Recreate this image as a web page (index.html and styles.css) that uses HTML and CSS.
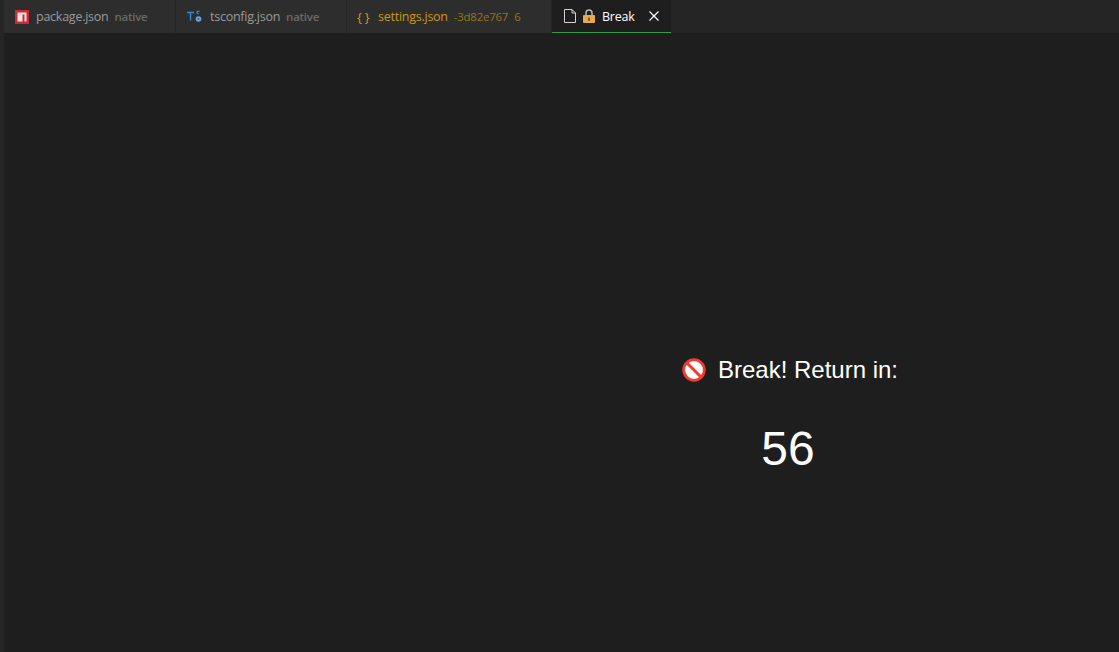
FILE: index.html
```html
<!DOCTYPE html>
<html lang="en">
<head>
    <meta charset="UTF-8">
    <meta name="viewport" content="width=device-width, initial-scale=1.0">
    <title>Break</title>
    <link rel="stylesheet" href="styles.css">
</head>
<body>
    <div class="workbench">
        <div class="tabs">
            <div class="tab tab-package">
                <svg class="icon" width="14" height="14" viewBox="0 0 14 14">
                    <rect width="14" height="14" fill="#cb2a31"/>
                    <path d="M2.5 2.5h9v9H9.5V4.5H7.5v7h-5z" fill="#f3e3e3"/>
                </svg>
                <span class="name">package.json</span>
                <span class="desc">native</span>
            </div>
            <div class="tab tab-tsconfig">
                <svg class="icon" width="16" height="14" viewBox="0 0 16 14">
                    <path d="M0 2.5h7M3.5 2.5v8" stroke="#2f8fdc" stroke-width="1.4" fill="none"/>
                    <path d="M12.5 1.5c-2-1-3.5.6-2 1.8l1 .7" stroke="#2f8fdc" stroke-width="1.2" fill="none"/>
                    <circle cx="11.5" cy="9" r="2.8" fill="#6fa8d8"/>
                    <circle cx="11.5" cy="9" r="1" fill="#2a5f8f"/>
                </svg>
                <span class="name">tsconfig.json</span>
                <span class="desc">native</span>
            </div>
            <div class="tab tab-settings">
                <span class="braces">{ }</span>
                <span class="name">settings.json</span>
                <span class="desc">-3d82e767</span>
                <span class="desc count">6</span>
            </div>
            <div class="tab tab-active">
                <svg class="icon" width="12" height="14" viewBox="0 0 12 14">
                    <path d="M.5.5h7.5l3.500 3.500v9.500H.5z" fill="none" stroke="#d8cfcf"/>
                    <path d="M8 .5v3.500h3.500" fill="none" stroke="#d8cfcf"/>
                </svg>
                <svg class="icon" width="12" height="14" viewBox="0 0 12 14">
                    <path d="M3 6.500V4a3 3 0 0 1 6 0v2.500" fill="none" stroke="#b9b9b9" stroke-width="1.500"/>
                    <rect y="6" width="12" height="8" rx="1" fill="#e8aa4c"/>
                    <rect x="5.200" y="8.500" width="1.600" height="3.500" fill="#6b4a12"/>
                </svg>
                <span class="name">Break</span>
                <svg class="close" width="10" height="10" viewBox="0 0 10 10">
                    <path d="M.5.500l9 9M9.500.500l-9 9" stroke="#fff" stroke-width="1.300"/>
                </svg>
            </div>
        </div>
        <main class="content">
            <div class="message">
                <svg class="stop" width="24" height="24" viewBox="0 0 24 24">
                    <circle cx="12" cy="12" r="10.300" fill="#fff" stroke="#f03a33" stroke-width="2.800"/>
                    <path d="M5 5l14 14" stroke="#f03a33" stroke-width="3"/>
                </svg>
                <span>Break! Return in:</span>
            </div>
            <div class="countdown">56</div>
        </main>
    </div>
</body>
</html>
```

FILE: styles.css
```css
* {
    box-sizing: border-box;
    margin: 0;
    padding: 0;
}

html, body {
    height: 100%;
    overflow: hidden;
}

body {
    background-color: #252526;
    padding-left: 4px;
}

.workbench {
    height: 100%;
    display: flex;
    flex-direction: column;
    background-color: #1e1e1e;
}

.tabs {
    display: flex;
    height: 33px;
    background-color: #252526;
    font-family: "Open Sans", sans-serif;
    font-size: 12.5px;
    letter-spacing: -0.25px;
}

.tab {
    display: flex;
    align-items: center;
    height: 33px;
    background-color: #2d2d2d;
    border-right: 1px solid #252526;
    color: #9a9a9a;
    white-space: nowrap;
}

.tab-package {
    width: 172px;
    padding-left: 11px;
}

.tab-tsconfig {
    width: 171px;
    padding-left: 11px;
}

.tab-settings {
    width: 205px;
    padding-left: 10px;
    color: #c99a12;
}

.tab-active {
    width: 119px;
    padding-left: 12px;
    background-color: #1e1e1e;
    border-right: none;
    border-bottom: 1px solid #2ea043;
    color: #fff;
}

.icon {
    flex-shrink: 0;
    margin-right: 7px;
}

.braces {
    width: 14px;
    margin-right: 7px;
    font-size: 13px;
    white-space: nowrap;
}

.desc {
    margin-left: 6px;
    font-size: 11.5px;
    opacity: 0.65;
}

.tab-package .desc, .tab-tsconfig .desc {
    font-weight: 600;
    color: #8a8a8a;
}

.close {
    margin-left: 15px;
}

.content {
    flex: 1;
    padding: 317px 0 0 457px;
    display: flex;
    flex-direction: column;
    align-items: center;
    font-family: "Liberation Sans", Arial, sans-serif;
    color: #fff;
}

.message {
    display: flex;
    align-items: center;
    gap: 12px;
    height: 40px;
    font-size: 24px;
}

.countdown {
    margin-top: 30px;
    margin-right: 4px;
    font-size: 48px;
    line-height: 58px;
}
```
